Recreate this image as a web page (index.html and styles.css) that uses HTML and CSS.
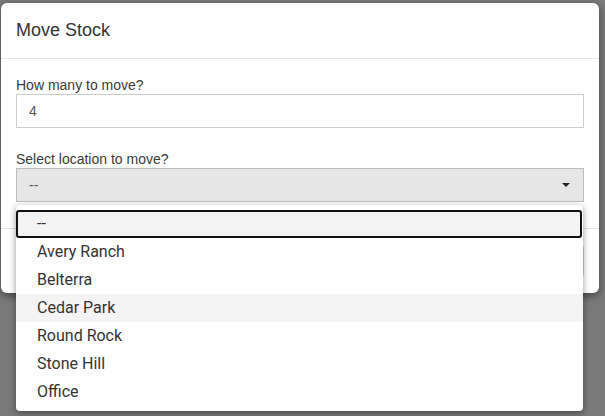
FILE: index.html
```html
<!DOCTYPE html>
<html lang="en">
<head>
<meta charset="utf-8">
<title>Move Stock</title>
<link rel="stylesheet" href="styles.css">
</head>
<body>
<div class="backdrop">
  <div class="modal">
    <div class="modal-header">
      <h4 class="modal-title">Move Stock</h4>
    </div>
    <div class="modal-body">
      <div class="form-group">
        <label class="label">How many to move?</label>
        <div class="input">4</div>
      </div>
      <div class="form-group second">
        <label class="label">Select location to move?</label>
        <div class="select">
          <span>--</span>
          <svg class="caret" width="8" height="4" viewBox="0 0 8 4"><path d="M0 0H8L4 4Z" fill="#222"/></svg>
        </div>
      </div>
    </div>
    <div class="modal-footer">
      <div class="btn">Close</div>
    </div>
  </div>
  <ul class="dropdown">
    <li class="opt focused">--</li>
    <li class="opt">Avery Ranch</li>
    <li class="opt">Belterra</li>
    <li class="opt hover">Cedar Park</li>
    <li class="opt">Round Rock</li>
    <li class="opt">Stone Hill</li>
    <li class="opt">Office</li>
  </ul>
</div>
</body>
</html>
```

FILE: styles.css
```css
html, body {
  margin: 0;
  padding: 0;
}
body {
  background: #7a7a7a;
  font-family: "Liberation Sans", Arial, sans-serif;
  color: #333;
}
.backdrop {
  position: relative;
  height: 416px;
  padding: 3px 0 0 1px;
  box-sizing: border-box;
  overflow: hidden;
}
.modal {
  width: 598px;
  background: #fff;
  border-radius: 6px;
  box-shadow: 0 3px 9px rgba(0, 0, 0, 0.45);
}
.modal-header {
  padding: 15px;
  border-bottom: 1px solid #e5e5e5;
}
.modal-title {
  margin: 0;
  font-size: 18px;
  line-height: 25px;
  font-weight: normal;
  color: #333;
}
.modal-body {
  padding: 18px 15px 26px 15px;
}
.label {
  display: block;
  font-size: 14px;
  line-height: 17px;
  color: #3a3a3a;
}
.form-group.second {
  margin-top: 23px;
}
.input {
  height: 34px;
  box-sizing: border-box;
  border: 1px solid #ccc;
  padding: 0 12px;
  font-size: 14px;
  line-height: 32px;
  color: #555;
}
.select {
  height: 34px;
  box-sizing: border-box;
  border: 1px solid #bdbdbd;
  background: #e6e6e6;
  padding: 0 13px 0 12px;
  display: flex;
  align-items: center;
  justify-content: space-between;
  font-size: 14px;
  color: #555;
}
.caret {
  display: block;
}
.modal-footer {
  border-top: 1px solid #e5e5e5;
  padding: 15px;
  display: flex;
  justify-content: flex-end;
}
.btn {
  height: 34px;
  box-sizing: border-box;
  border: 1px solid #ccc;
  border-radius: 4px;
  padding: 0 12px;
  font-size: 14px;
  line-height: 32px;
  color: #333;
  background: #fff;
}
.dropdown {
  position: absolute;
  left: 16px;
  top: 205px;
  width: 567px;
  margin: 0;
  padding: 5px 0;
  list-style: none;
  background: #fff;
  border-radius: 4px;
  box-shadow: 0 2px 7px rgba(0, 0, 0, 0.4);
  font-family: Roboto, "Liberation Sans", sans-serif;
  font-size: 16px;
  color: #333;
}
.opt {
  height: 28px;
  line-height: 28px;
  padding-left: 21px;
  box-sizing: border-box;
}
.opt.focused {
  background: #f4f4f4;
  border: 2px solid #111;
  border-radius: 3px;
  line-height: 24px;
  padding-left: 19px;
  margin-right: 1px;
}
.opt.hover {
  background: #f4f4f4;
}
```
